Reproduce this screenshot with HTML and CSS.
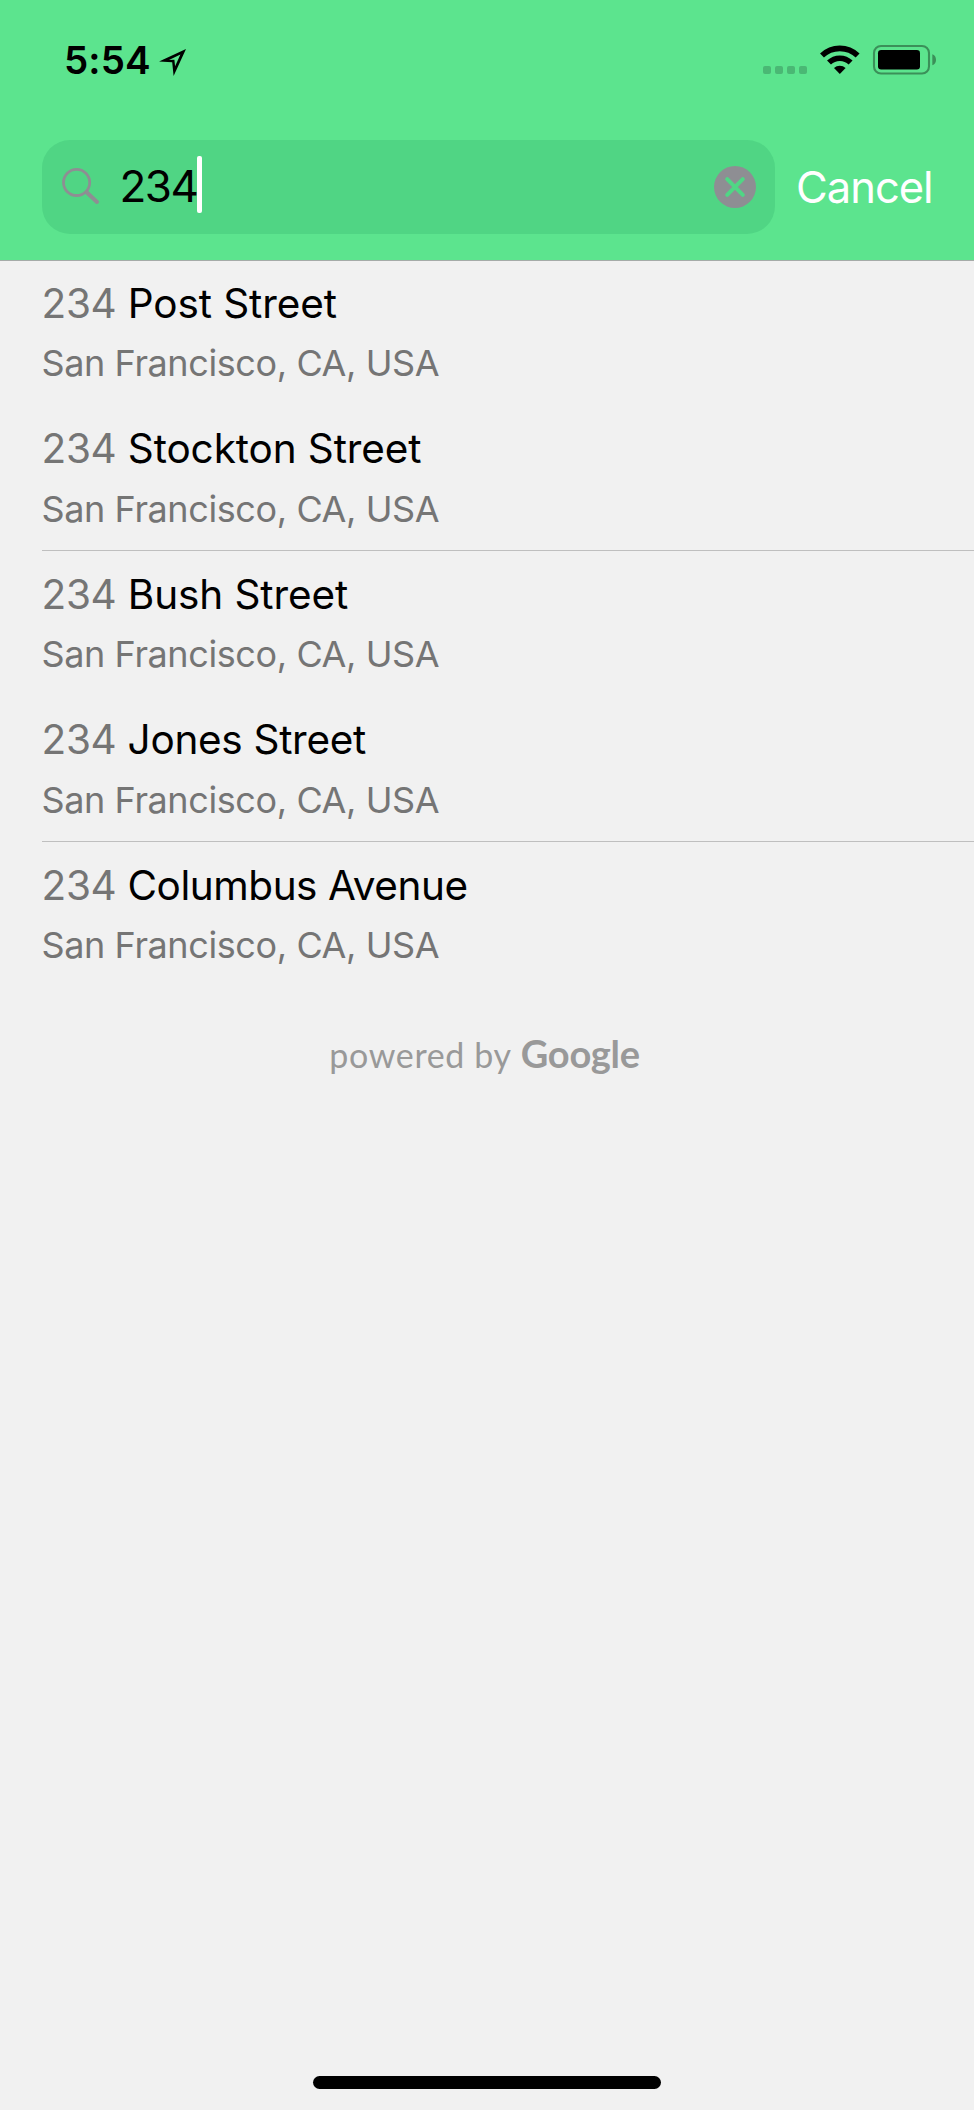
FILE: index.html
```
<!DOCTYPE html>
<html lang="en">
<head>
<meta charset="utf-8">
<title>Address search</title>
<link rel="stylesheet" href="styles.css">
</head>
<body>
<div class="screen">
  <header class="header">
    <div class="status">
      <span class="time">5:54</span>
      <svg class="location" width="30" height="30" viewBox="0 0 30 30"><path fill-rule="evenodd" d="M2 14.4 L29 2 L16.6 29 L15.2 15.3 Z M12 12.9 L17.4 12.8 L18.1 19.2 L23.4 7.6 Z" fill="#000"/></svg>
      <svg class="indicators" width="176" height="34" viewBox="762 43 176 34">
        <g fill="#4ab874"><rect x="763" y="66" width="8" height="8" rx="2"/><rect x="775" y="66" width="8" height="8" rx="2"/><rect x="787" y="66" width="8" height="8" rx="2"/><rect x="799" y="66" width="8" height="8" rx="2"/></g>
        <g fill="none" stroke="#000" stroke-width="5.6"><path d="M822 55.6 A25.6 25.6 0 0 1 857.6 55.6"/><path d="M829 62.6 A15.4 15.4 0 0 1 850.6 62.6"/></g>
        <path d="M839.8 74 L834 68 A8.6 8.6 0 0 1 845.6 68 Z" fill="#000"/>
        <rect x="874" y="46" width="55" height="27.5" rx="7" fill="none" stroke="#3b9059" stroke-width="2.1"/>
        <rect x="878" y="50" width="42" height="19.5" rx="3.2" fill="#000"/>
        <path d="M932.3 54.2 Q936 55.5 936 59.8 Q936 64 932.3 65.3 Z" fill="#3b9059"/>
      </svg>
    </div>
    <div class="search">
      <div class="field">
        <svg class="glass" width="40" height="40" viewBox="60 165 40 40"><circle cx="76.6" cy="182.4" r="13.1" fill="none" stroke="#8e8e93" stroke-width="2.8"/><path d="M86.6 192.2 L97 202" stroke="#8e8e93" stroke-width="4" stroke-linecap="round"/></svg>
        <span class="query">234</span><span class="caret"></span>
        <svg class="clear" width="42" height="42" viewBox="0 0 42 42"><circle cx="21" cy="21" r="21" fill="#8e8e93"/><path d="M13.2 13.2 L28.8 28.8 M28.8 13.2 L13.2 28.8" stroke="#50d685" stroke-width="4" stroke-linecap="round"/></svg>
      </div>
      <span class="cancel">Cancel</span>
    </div>
  </header>
  <main class="results">
    <div class="row"><div class="name"><span class="match">234</span> Post Street</div><div class="place">San Francisco, CA, USA</div></div>
    <div class="row ruled"><div class="name"><span class="match">234</span> Stockton Street</div><div class="place">San Francisco, CA, USA</div></div>
    <div class="row"><div class="name"><span class="match">234</span> Bush Street</div><div class="place">San Francisco, CA, USA</div></div>
    <div class="row ruled"><div class="name snug"><span class="match">234</span> Jones Street</div><div class="place">San Francisco, CA, USA</div></div>
    <div class="row"><div class="name tight"><span class="match">234</span> Columbus Avenue</div><div class="place">San Francisco, CA, USA</div></div>
  </main>
  <div class="credit"><span class="powered">powered by</span><span class="brand">Google</span></div>
  <div class="home"></div>
</div>
</body>
</html>
```
FILE: styles.css
```
* { box-sizing: border-box; }
body { margin: 0; background: #f1f1f1; font-family: Inter, Roboto, sans-serif; color: #000; }
.screen { width: 974px; height: 2110px; display: flex; flex-direction: column; overflow: hidden; white-space: nowrap; }
.header { height: 261px; flex: none; background: #5ce48e; border-bottom: 1px solid #a5aba8; }
.status { height: 140px; display: flex; align-items: flex-start; padding: 0 36px 0 64px; }
.time { font-size: 38.5px; line-height: 46px; font-weight: 600; margin-top: 37px; width: 93px; letter-spacing: 0.1px; }
.location { margin-top: 47px; }
.indicators { margin: 43px 0 0 auto; }
.search { height: 94px; display: flex; align-items: center; padding-left: 42px; }
.field { width: 733px; height: 94px; border-radius: 28px; background: #50d584; display: flex; align-items: center; padding: 0 19px 0 18px; }
.glass { margin-top: -4px; }
.query { font-size: 44px; line-height: 54px; margin: -3px 0 0 19.5px; width: 77.5px; letter-spacing: -1.5px; }
.caret { width: 5px; height: 57px; border-radius: 2px; background: #fff; margin-top: -5px; }
.clear { margin-left: auto; }
.cancel { font-size: 43.5px; line-height: 54px; color: #fff; margin-left: 21px; letter-spacing: -1px; }
.results { padding-left: 42px; }
.row { height: 145.5px; padding-top: 19.5px; display: flex; flex-direction: column; gap: 13px; }
.row:first-child { height: 144.5px; padding-top: 18.5px; }
.ruled { border-bottom: 1px solid #bfbfbf; }
.row:nth-child(n+2) .place { margin-top: 0.5px; }
.name { font-size: 40.5px; line-height: 48px; letter-spacing: -0.1px; }
.snug { letter-spacing: -0.3px; }
.tight { letter-spacing: -0.45px; }
.match { color: #757575; margin-left: -0.5px; letter-spacing: -0.3px; }
.place { font-size: 36px; line-height: 44px; color: #757575; margin-left: -0.5px; letter-spacing: -0.4px; }
.credit { display: flex; align-items: baseline; justify-content: center; gap: 9px; margin-top: 35px; padding-right: 5px; color: #999; font-family: Lato, sans-serif; }
.powered { font-size: 34px; line-height: 60px; letter-spacing: 0.65px; }
.brand { font-size: 38px; font-weight: 700; line-height: 60px; letter-spacing: -0.3px; }
.home { width: 348px; height: 13px; border-radius: 7px; background: #000; margin: auto auto 21px; }
```
